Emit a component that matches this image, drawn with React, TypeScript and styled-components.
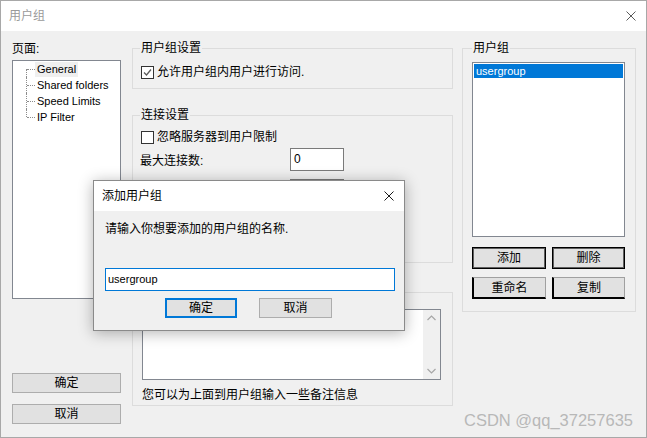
import React from 'react';
import styled, { createGlobalStyle } from 'styled-components';

const GlobalStyle = createGlobalStyle`
    html, body {
        margin: 0;
        padding: 0;
        background: #ffffff;
    }
`;

const Window = styled.div`
    position: relative;
    width: 647px;
    height: 438px;
    box-sizing: border-box;
    border: 1px solid #a8a8a8;
    background: #f0f0f0;
    display: flex;
    flex-direction: column;
    font-family: "Liberation Sans", "Noto Sans CJK SC", sans-serif;
    font-size: 12px;
    line-height: 16px;
    color: #000;
`;

const TitleBar = styled.div<{ $active?: boolean }>`
    height: 30px;
    flex: none;
    background: #fff;
    display: flex;
    align-items: center;
    justify-content: space-between;
    padding-left: 8px;
    color: ${(p) => (p.$active ? '#000' : '#9a9a9a')};
`;

const CloseIcon = styled.svg`
    width: 10px;
    height: 10px;
    margin-right: 10px;
`;

const Body = styled.div`
    display: flex;
    padding: 10px 10px 0 11px;
    gap: 11px;
`;

const LeftColumn = styled.div`
    width: 109px;
    display: flex;
    flex-direction: column;
`;

const MiddleColumn = styled.div`
    width: 321px;
    display: flex;
    flex-direction: column;
`;

const RightColumn = styled.div`
    width: 174px;
    margin-left: -2px;
    display: flex;
    flex-direction: column;
`;

const Tree = styled.div`
    margin-top: 3px;
    height: 239px;
    box-sizing: border-box;
    border: 1px solid #828790;
    background: #fff;
    font-size: 11px;
`;

const TreeRow = styled.div`
    display: flex;
    align-items: center;
    height: 16px;
    padding-left: 13px;
`;

const Connector = styled.span<{ $pos: 'first' | 'mid' | 'last' }>`
    position: relative;
    width: 9px;
    height: 16px;
    flex: none;
    &::before {
        content: '';
        position: absolute;
        left: 0;
        top: ${(p) => (p.$pos === 'first' ? '8px' : '0')};
        bottom: ${(p) => (p.$pos === 'last' ? '8px' : '0')};
        border-left: 1px dotted #8c8c8c;
    }
    &::after {
        content: '';
        position: absolute;
        left: 1px;
        right: 0;
        top: 8px;
        border-top: 1px dotted #8c8c8c;
    }
`;

const TreeLabel = styled.span<{ $selected?: boolean }>`
    padding: 0 2px;
    line-height: 15px;
    background: ${(p) => (p.$selected ? '#efefef' : 'transparent')};
`;

const Button = styled.div<{ $variant?: 'default' | 'dark' | 'focus' | 'stale' }>`
    box-sizing: border-box;
    height: 20px;
    display: flex;
    align-items: center;
    justify-content: center;
    background: #e1e1e1;
    border: 1px solid #adadad;
    ${(p) => p.$variant === 'dark' && `
        height: 22px;
        border: 1px solid #000;
        box-shadow: inset 0 0 0 1px #5f5f5f;
    `}
    ${(p) => p.$variant === 'stale' && `
        height: 22px;
        border: 1px solid #a0a0a0;
        border-bottom: 2px solid #000;
        border-left: 2px solid #000;
    `}
    ${(p) => p.$variant === 'focus' && `
        border: 2px solid #0078d7;
    `}
`;

const SideButton = styled(Button)<{ $gap: number }>`
    margin-top: ${(p) => p.$gap}px;
`;

const Group = styled.fieldset<{ $gap?: number; $pad: string }>`
    margin: ${(p) => p.$gap ?? 0}px 0 0 0;
    padding: ${(p) => p.$pad};
    border: 1px solid #dcdcdc;
    min-width: 0;
`;

const Legend = styled.legend`
    padding: 0 1px;
    line-height: 16px;
`;

const CheckRow = styled.label`
    display: flex;
    align-items: center;
    height: 16px;
    gap: 3px;
    padding-left: 1px;
`;

const CheckBox = styled.span`
    width: 13px;
    height: 13px;
    box-sizing: border-box;
    border: 1px solid #333;
    background: #fff;
    display: flex;
    align-items: center;
    justify-content: center;
`;

const FieldRow = styled.div<{ $gap: number }>`
    display: flex;
    align-items: center;
    margin-top: ${(p) => p.$gap}px;
`;

const FieldLabel = styled.span`
    width: 150px;
    padding-top: 3px;
`;

const NumberInput = styled.div`
    width: 54px;
    height: 23px;
    box-sizing: border-box;
    border: 1px solid #7a7a7a;
    background: #fff;
    padding: 2px 3px;
    line-height: 17px;
`;

const Memo = styled.div`
    display: flex;
    width: 299px;
    height: 71px;
    box-sizing: border-box;
    border: 1px solid #828790;
    background: #fff;
`;

const MemoText = styled.div`
    flex: 1;
`;

const ScrollBar = styled.div`
    width: 17px;
    background: #f0f0f0;
    display: flex;
    flex-direction: column;
    justify-content: space-between;
    align-items: center;
    padding: 5px 0;
`;

const Note = styled.div`
    margin-top: 7px;
`;

const ListBox = styled.div`
    width: 153px;
    height: 175px;
    box-sizing: border-box;
    border: 1px solid #828790;
    background: #fff;
    padding: 1px;
    font-size: 11px;
`;

const ListItem = styled.div<{ $selected?: boolean }>`
    height: 14px;
    line-height: 14px;
    padding-left: 2px;
    background: ${(p) => (p.$selected ? '#0078d7' : 'transparent')};
    color: ${(p) => (p.$selected ? '#fff' : '#000')};
`;

const ButtonGrid = styled.div`
    display: grid;
    grid-template-columns: 74px 73px;
    column-gap: 6px;
    row-gap: 8px;
    margin-top: 10px;
`;

const Dialog = styled.div`
    position: absolute;
    left: 92px;
    top: 179px;
    width: 312px;
    height: 151px;
    box-sizing: border-box;
    border: 1px solid #8a8a8a;
    background: #f0f0f0;
    box-shadow: 0 2px 14px rgba(0, 0, 0, 0.3);
    display: flex;
    flex-direction: column;
`;

const DialogBody = styled.div`
    padding: 10px 9px 0 11px;
`;

const TextInput = styled.div`
    margin-top: 31px;
    height: 23px;
    box-sizing: border-box;
    border: 1px solid #0078d7;
    background: #fff;
    padding: 0 2px;
    line-height: 21px;
    font-size: 11px;
`;

const DialogButtons = styled.div`
    display: flex;
    justify-content: center;
    gap: 22px;
    margin-top: 7px;
    margin-left: -3px;
`;

const Watermark = styled.div`
    position: absolute;
    right: 13px;
    top: 409px;
    font-size: 16.5px;
    line-height: 20px;
    color: #b8b8b8;
    font-family: "Liberation Sans", sans-serif;
`;

function Close({ color }: { color: string }) {
    return (
        <CloseIcon viewBox="0 0 10 10">
            <path d="M0.5 0.5 L9.5 9.5 M9.5 0.5 L0.5 9.5" stroke={color} strokeWidth="1" fill="none" />
        </CloseIcon>
    );
}

function Check({ checked, children }: { checked?: boolean; children: React.ReactNode }) {
    return (
        <CheckRow>
            <CheckBox>
                {checked && (
                    <svg width="9" height="9" viewBox="0 0 9 9">
                        <path d="M1 4.5 L3.5 7 L8 1.5" stroke="#5c5c5c" strokeWidth="1.3" fill="none" />
                    </svg>
                )}
            </CheckBox>
            {children}
        </CheckRow>
    );
}

const pages: string[] = ['General', 'Shared folders', 'Speed Limits', 'IP Filter'];

export default function App() {
    return (
        <React.Fragment>
            <GlobalStyle />
            <Window>
                <TitleBar>
                    <span>用户组</span>
                    <Close color="#5a5a5a" />
                </TitleBar>
                <Body>
                    <LeftColumn>
                        <span>页面:</span>
                        <Tree>
                            {pages.map((page, index) => (
                                <TreeRow key={page}>
                                    <Connector
                                        $pos={index === 0 ? 'first' : index === pages.length - 1 ? 'last' : 'mid'}
                                    />
                                    <TreeLabel $selected={index === 0}>{page}</TreeLabel>
                                </TreeRow>
                            ))}
                        </Tree>
                        <SideButton $gap={74}>确定</SideButton>
                        <SideButton $gap={11}>取消</SideButton>
                    </LeftColumn>

                    <MiddleColumn>
                        <Group $gap={-1} $pad="8px 8px 8px 7px">
                            <Legend>用户组设置</Legend>
                            <Check checked>允许用户组内用户进行访问.</Check>
                        </Group>
                        <Group $gap={18} $pad="6px 8px 29px 7px">
                            <Legend>连接设置</Legend>
                            <Check>忽略服务器到用户限制</Check>
                            <FieldRow $gap={3}>
                                <FieldLabel>最大连接数:</FieldLabel>
                                <NumberInput>0</NumberInput>
                            </FieldRow>
                            {/* rows below sit under the dialog; only the top edge of the next box shows */}
                            <FieldRow $gap={8}>
                                <FieldLabel />
                                <NumberInput />
                            </FieldRow>
                            <FieldRow $gap={8}>
                                <FieldLabel />
                                <NumberInput />
                            </FieldRow>
                        </Group>
                        <Group $gap={29} $pad="16px 8px 2px 9px">
                            <Memo>
                                <MemoText />
                                <ScrollBar>
                                    <svg width="9" height="6" viewBox="0 0 9 6">
                                        <path d="M0.5 5 L4.5 1 L8.5 5" stroke="#a6a6a6" strokeWidth="1.2" fill="none" />
                                    </svg>
                                    <svg width="9" height="6" viewBox="0 0 9 6">
                                        <path d="M0.5 1 L4.5 5 L8.5 1" stroke="#a6a6a6" strokeWidth="1.2" fill="none" />
                                    </svg>
                                </ScrollBar>
                            </Memo>
                            <Note>您可以为上面到用户组输入一些备注信息</Note>
                        </Group>
                    </MiddleColumn>

                    <RightColumn>
                        <Group $gap={-1} $pad="6px 9px 12px 9px">
                            <Legend>用户组</Legend>
                            <ListBox>
                                <ListItem $selected>usergroup</ListItem>
                            </ListBox>
                            <ButtonGrid>
                                <Button $variant="dark">添加</Button>
                                <Button $variant="dark">删除</Button>
                                <Button $variant="stale">重命名</Button>
                                <Button $variant="stale">复制</Button>
                            </ButtonGrid>
                        </Group>
                    </RightColumn>
                </Body>

                <Watermark>CSDN @qq_37257635</Watermark>

                <Dialog>
                    <TitleBar $active>
                        <span>添加用户组</span>
                        <Close color="#1a1a1a" />
                    </TitleBar>
                    <DialogBody>
                        <div>请输入你想要添加的用户组的名称.</div>
                        <TextInput>usergroup</TextInput>
                        <DialogButtons>
                            <Button $variant="focus" style={{ width: 72 }}>确定</Button>
                            <Button style={{ width: 73 }}>取消</Button>
                        </DialogButtons>
                    </DialogBody>
                </Dialog>
            </Window>
        </React.Fragment>
    );
}
